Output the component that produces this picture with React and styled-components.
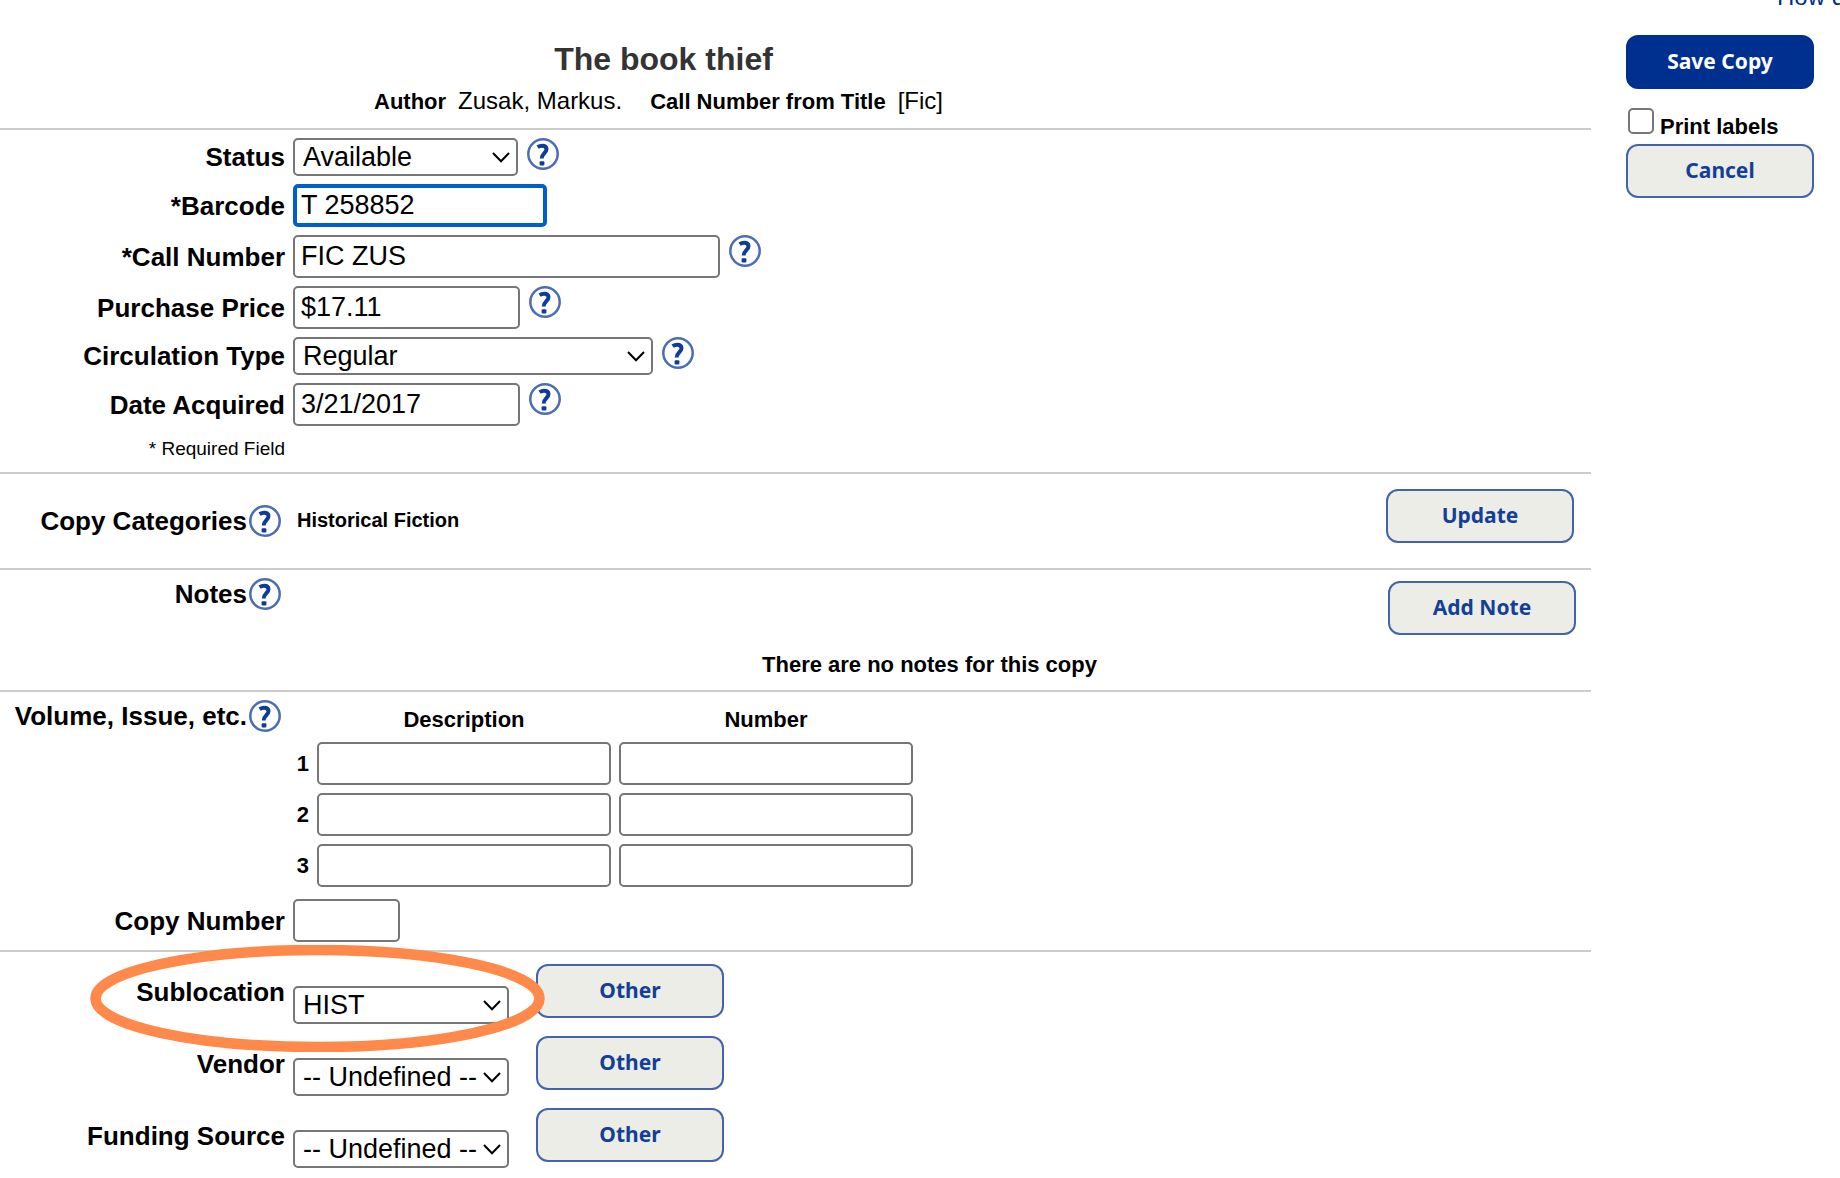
import React from 'react';
import styled, { createGlobalStyle } from 'styled-components';

const GlobalStyle = createGlobalStyle`
  * {
    box-sizing: border-box;
  }

  body {
    margin: 0;
    background-color: white;
    color: black;
    font-family: "Liberation Sans", Arial, sans-serif;
    overflow-x: hidden;
  }
`;

const Page = styled.div`
  overflow: hidden;
`;

const TopBar = styled.div`
  display: flex;
  justify-content: flex-end;
  margin: -17px -5px 0 0;
  font-size: 24px;
  line-height: 28px;

  a {
    color: #00308f;
    text-decoration: none;
  }
`;

const Body = styled.form`
  display: flex;
  align-items: flex-start;
`;

const Main = styled.main`
  flex: 1;
  min-width: 0;
`;

const Side = styled.aside`
  display: flex;
  flex-direction: column;
  align-items: flex-start;
  flex: none;
  padding: 24px 26px 0 35px;
`;

const Header = styled.header`
  display: flex;
  flex-direction: column;
  align-items: center;
  gap: 10px;
  padding: 30px 264px 12px 0;
  border-bottom: 2px solid #ccc;
`;

const Title = styled.h1`
  margin: 0;
  color: #333;
  font-size: 32px;
  line-height: 36px;
`;

const Facts = styled.dl`
  display: flex;
  align-items: baseline;
  margin: 0;
  padding-right: 10px;
  line-height: 28px;
`;

const Term = styled.dt`
  margin-right: 12px;
  font-size: 22px;
  font-weight: bold;
`;

const Detail = styled.dd`
  margin: 0 28px 0 0;
  font-size: 24px;

  &:last-child {
    margin-right: 0;
  }
`;

const Section = styled.section`
  display: flex;
  flex-direction: column;
  gap: 8px;
  padding: 8px 0;
  border-bottom: 2px solid #ccc;

  &:last-child {
    border-bottom: none;
  }
`;

const Row = styled.div`
  display: grid;
  grid-template-columns: 285px 1fr;
  column-gap: 8px;
  align-items: ${(props) => props.$align || 'center'};
`;

const TallRow = styled(Row)`
  position: relative;
  min-height: 64px;
`;

const LabelCell = styled.div`
  display: flex;
  align-items: center;
  justify-content: flex-end;
  gap: 2px;
  padding-right: ${(props) => (props.$withHelp ? '4px' : '0')};
  font-size: 26px;
  font-weight: bold;
  line-height: 30px;
  white-space: nowrap;
`;

const Hint = styled.div`
  font-size: 19px;
  line-height: 30px;
  text-align: right;
`;

const Control = styled.div`
  display: flex;
  align-items: flex-start;
  gap: 9px;
`;

const TallControl = styled.div`
  display: flex;
  align-items: flex-start;
  align-self: stretch;
  gap: 27px;
  padding-top: 4px;
`;

const TextInput = styled.input`
  width: ${(props) => props.$width || '100%'};
  height: 43px;
  padding: 0 6px;
  background-color: white;
  border: 2px solid #767676;
  border-radius: 5px;
  color: black;
  font-family: inherit;
  font-size: 27px;

  &:focus {
    border: 4px solid #005fcc;
    padding: 0 4px;
    outline: none;
  }
`;

const SelectBox = styled.div`
  position: relative;
  width: ${(props) => props.$width};
  align-self: ${(props) => props.$align || 'auto'};

  select {
    display: block;
    width: 100%;
    height: 38px;
    padding: 0 8px;
    appearance: none;
    background-color: white;
    border: 2px solid #767676;
    border-radius: 5px;
    color: black;
    font-family: inherit;
    font-size: 27px;
  }

  svg {
    position: absolute;
    top: 14px;
    right: 8px;
    pointer-events: none;
  }
`;

const HelpButton = styled.button`
  flex: none;
  width: 32px;
  height: 32px;
  padding: 0;
  border: none;
  background: none;
  cursor: pointer;

  svg {
    display: block;
  }
`;

const Button = styled.button`
  flex: none;
  width: 188px;
  height: 54px;
  padding: 0 0 2px;
  background-color: ${(props) => (props.$primary ? '#00308f' : '#ecede6')};
  border: 2px solid ${(props) => (props.$primary ? '#00308f' : '#4364ab')};
  border-radius: 12px;
  color: ${(props) => (props.$primary ? 'white' : '#143f97')};
  font-family: "Noto Sans", sans-serif;
  font-size: 21px;
  font-weight: bold;
  cursor: pointer;
`;

const Categories = styled.div`
  display: flex;
  align-items: center;
  justify-content: space-between;
  min-height: 63px;
  padding: 0 17px 0 4px;
  font-size: 20px;
  font-weight: bold;

  button {
    align-self: flex-start;
  }
`;

const CategorySection = styled(Section)`
  padding: 15px 0 16px;
`;

const Notes = styled.div`
  display: flex;
  flex-direction: column;
  align-items: flex-end;
  gap: 16px;
  padding: 3px 15px 3px 0;
`;

const NoNotes = styled.p`
  align-self: stretch;
  margin: 0;
  padding-right: 10px;
  font-size: 22px;
  font-weight: bold;
  line-height: 28px;
  text-align: center;
`;

const VolumeTable = styled.table`
  margin-bottom: 4px;
  border-collapse: collapse;
  font-size: 22px;
  line-height: 28px;

  thead th {
    padding: 6px 0 0 8px;
  }

  thead td {
    width: 16px;
    padding: 0;
  }

  tbody th {
    padding: 8px 0 0;
    text-align: right;
  }

  tbody td {
    width: 302px;
    padding: 8px 0 0 8px;
  }

  input {
    display: block;
  }
`;

const CheckLabel = styled.label`
  display: flex;
  align-items: baseline;
  gap: 6px;
  margin: 19px 0 3px 2px;
  font-size: 22px;
  font-weight: bold;
  line-height: 28px;

  input {
    width: 26px;
    height: 26px;
    margin: 0;
    appearance: none;
    background-color: white;
    border: 2px solid #767676;
    border-radius: 5px;
  }

  input:checked {
    background-color: #005fcc;
  }
`;

// marks the row it sits in
const Ring = styled.svg`
  position: absolute;
  top: -15px;
  left: 90px;
  z-index: 1;
  pointer-events: none;
`;

const Help = ({ topic }) => (
  <HelpButton type="button" aria-label={`Help: ${topic}`}>
    <svg width="32" height="32" viewBox="0 0 32 32" fill="none">
      <circle cx="16" cy="16" r="14.7" stroke="#4a6db3" strokeWidth="2.5" />
      <path
        d="M10.6 9.1c1.4-.9 3-1.4 4.6-1.4 2.7 0 4.3 1.3 4.3 3.5 0 3.8-4.8 4.3-4.8 9.4"
        stroke="#0f3c96"
        strokeWidth="4"
      />
      <rect x="12.6" y="23.2" width="4.8" height="4.4" rx="1" fill="#0f3c96" />
    </svg>
  </HelpButton>
);

const Select = ({ id, width, align, options }) => (
  <SelectBox $width={width} $align={align}>
    <select id={id} defaultValue={options[0]}>
      {options.map((option) => (
        <option key={option}>{option}</option>
      ))}
    </select>
    <svg width="18" height="11" viewBox="0 0 18 11" fill="none">
      <path d="M1 1l8 8.2L17 1" stroke="black" strokeWidth="2" />
    </svg>
  </SelectBox>
);

const Field = ({ id, label, help, children }) => (
  <Row>
    <LabelCell>
      <label htmlFor={id}>{label}</label>
    </LabelCell>
    <Control>
      {children}
      {help && <Help topic={label} />}
    </Control>
  </Row>
);

const sources = [
  { id: 'sublocation', label: 'Sublocation', value: 'HIST', marked: true },
  { id: 'vendor', label: 'Vendor', value: '-- Undefined --' },
  { id: 'funding', label: 'Funding Source', value: '-- Undefined --' },
];

const App = () => (
  <Page>
    <GlobalStyle />
    <TopBar>
      <a href="#help">How d</a>
    </TopBar>
    <Body onSubmit={(e) => e.preventDefault()}>
      <Main>
        <Header>
          <Title>The book thief</Title>
          <Facts>
            <Term>Author</Term>
            <Detail>Zusak, Markus.</Detail>
            <Term>Call Number from Title</Term>
            <Detail>[Fic]</Detail>
          </Facts>
        </Header>

        <Section>
          <Field id="status" label="Status" help>
            <Select id="status" width="225px" options={['Available']} />
          </Field>
          <Field id="barcode" label="*Barcode">
            <TextInput id="barcode" $width="254px" defaultValue="T 258852" autoFocus />
          </Field>
          <Field id="callNumber" label="*Call Number" help>
            <TextInput id="callNumber" $width="427px" defaultValue="FIC ZUS" />
          </Field>
          <Field id="price" label="Purchase Price" help>
            <TextInput id="price" $width="227px" defaultValue="$17.11" />
          </Field>
          <Field id="circulation" label="Circulation Type" help>
            <Select id="circulation" width="360px" options={['Regular']} />
          </Field>
          <Field id="acquired" label="Date Acquired" help>
            <TextInput id="acquired" $width="227px" defaultValue="3/21/2017" />
          </Field>
          <Row>
            <Hint>* Required Field</Hint>
          </Row>
        </Section>

        <CategorySection>
          <Row>
            <LabelCell $withHelp>
              <span>Copy Categories</span>
              <Help topic="Copy Categories" />
            </LabelCell>
            <Categories>
              <span>Historical Fiction</span>
              <Button type="button">Update</Button>
            </Categories>
          </Row>
        </CategorySection>

        <Section>
          <Row $align="start">
            <LabelCell $withHelp>
              <span>Notes</span>
              <Help topic="Notes" />
            </LabelCell>
            <Notes>
              <Button type="button">Add Note</Button>
              <NoNotes>There are no notes for this copy</NoNotes>
            </Notes>
          </Row>
        </Section>

        <Section>
          <Row $align="start">
            <LabelCell $withHelp>
              <span>Volume, Issue, etc.</span>
              <Help topic="Volume, Issue, etc." />
            </LabelCell>
            <div>
              <VolumeTable>
                <thead>
                  <tr>
                    <td />
                    <th scope="col">Description</th>
                    <th scope="col">Number</th>
                  </tr>
                </thead>
                <tbody>
                  {[1, 2, 3].map((n) => (
                    <tr key={n}>
                      <th scope="row">{n}</th>
                      <td>
                        <TextInput aria-label={`Description ${n}`} />
                      </td>
                      <td>
                        <TextInput aria-label={`Number ${n}`} />
                      </td>
                    </tr>
                  ))}
                </tbody>
              </VolumeTable>
            </div>
          </Row>
          <Field id="copyNumber" label="Copy Number">
            <TextInput id="copyNumber" $width="107px" />
          </Field>
        </Section>

        <Section>
          {sources.map(({ id, label, value, marked }) => (
            <TallRow key={id}>
              <LabelCell>
                <label htmlFor={id}>{label}</label>
              </LabelCell>
              <TallControl>
                <Select id={id} width="216px" align="flex-end" options={[value]} />
                <Button type="button">Other</Button>
              </TallControl>
              {marked && (
                <Ring width="455" height="107" viewBox="0 0 455 107" fill="none">
                  <ellipse cx="227.5" cy="53.5" rx="222" ry="48.5" stroke="#ff884b" strokeWidth="10.5" />
                </Ring>
              )}
            </TallRow>
          ))}
        </Section>
      </Main>

      <Side>
        <Button type="submit" $primary>
          Save Copy
        </Button>
        <CheckLabel>
          <input type="checkbox" />
          Print labels
        </CheckLabel>
        <Button type="button">Cancel</Button>
      </Side>
    </Body>
  </Page>
);

export default App;
